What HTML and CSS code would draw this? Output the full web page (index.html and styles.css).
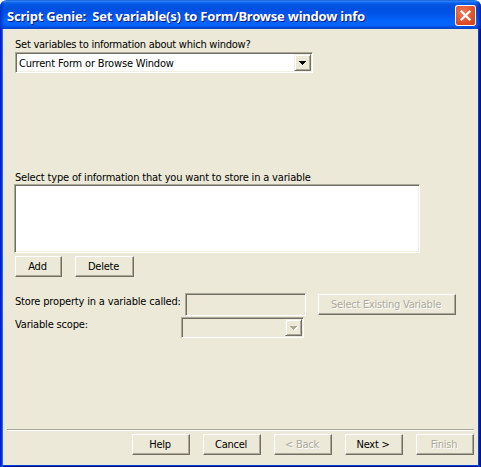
FILE: index.html
```html
<!DOCTYPE html>
<html lang="en">
<head>
<meta charset="utf-8">
<title>Script Genie</title>
<link rel="stylesheet" href="styles.css">
</head>
<body>
<div class="window">
  <header class="titlebar">
    <h1 class="title">Script Genie:&nbsp; Set variable(s) to Form/Browse window info</h1>
    <button class="close" aria-label="Close"><svg width="21" height="21" viewBox="0 0 21 21"><path d="M5.7 5.7 15.3 15.3M15.3 5.7 5.7 15.3" stroke="#fff" stroke-width="2.3"/></svg></button>
  </header>
  <main class="content">
    <section class="target">
      <div class="label l-target">Set variables to information about which window?</div>
      <div class="combo combo-target"><span class="combo-text">Current Form or Browse Window</span><span class="arrow"><svg width="7" height="4" viewBox="0 0 7 4" shape-rendering="crispEdges"><path d="M0 0H7V1H6V2H5V3H4V4H3V3H2V2H1V1H0Z" fill="#000"/></svg></span></div>
    </section>
    <section class="types">
      <div class="label l-types">Select type of information that you want to store in a variable</div>
      <div class="listbox"></div>
      <div class="actions">
        <button class="btn b-add"><span>Add</span></button>
        <button class="btn b-delete"><span>Delete</span></button>
      </div>
    </section>
    <section class="store">
      <div class="row">
        <div class="label l-store">Store property in a variable called:</div>
        <div class="field"></div>
        <button class="btn b-select disabled"><span>Select Existing Variable</span></button>
      </div>
      <div class="row">
        <div class="label l-scope">Variable scope:</div>
        <div class="combo combo-scope"><span class="arrow"><svg class="dim" width="8" height="5" viewBox="0 0 8 5" shape-rendering="crispEdges"><path d="M1 1H8V2H7V3H6V4H5V5H4V4H3V3H2V2H1Z" fill="#fff"/><path d="M0 0H7V1H6V2H5V3H4V4H3V3H2V2H1V1H0Z" fill="#aca899"/></svg></span></div>
      </div>
    </section>
  </main>
  <footer class="footer">
    <button class="btn"><span>Help</span></button>
    <button class="btn"><span>Cancel</span></button>
    <button class="btn disabled"><span>&lt; Back</span></button>
    <button class="btn"><span>Next &gt;</span></button>
    <button class="btn disabled"><span>Finish</span></button>
  </footer>
</div>
</body>
</html>
```
FILE: styles.css
```css
* { box-sizing: border-box; }
html { background: #fff; }
body {
  margin: 0;
  font: 11px/13px "DejaVu Sans Condensed", "DejaVu Sans", sans-serif;
  font-stretch: condensed;
  letter-spacing: -0.17px;
  color: #000;
}
.window {
  width: 481px;
  height: 467px;
  display: flex;
  flex-direction: column;
  background:
    linear-gradient(90deg, #0019cf 0 1px, #0831d9 1px 2px, #166aee 2px 3px, transparent 3px calc(100% - 3px), #0441d8 calc(100% - 3px) calc(100% - 2px), #001ea0 calc(100% - 2px) calc(100% - 1px), #00138c calc(100% - 1px)),
    linear-gradient(0deg, #00138c 0 1px, #0441d8 1px 2px, #ece9d8 2px);
  border-radius: 7px 7px 0 0;
  overflow: hidden;
}
.titlebar {
  height: 29px;
  flex: none;
  display: flex;
  justify-content: space-between;
  padding: 5px 5px 0 7px;
  background:
    linear-gradient(90deg, #0030c8 0, transparent 4px, transparent calc(100% - 5px), #0024ac 100%),
    linear-gradient(180deg, #0848c8 0, #3a8cf8 1px, #1470f0 2px, #0458e4 4px, #0050e0 8px, #0054e8 14px, #0464fc 21px, #0464fc 25px, #0050e0 27px, #0040c8 29px);
}
.title {
  margin: 0;
  padding-top: 3px;
  font: bold 13px/16px "Noto Sans", sans-serif;
  letter-spacing: -0.22px;
  color: #fff;
  text-shadow: 1px 1px 0 #0a1883;
  white-space: nowrap;
}
.close {
  width: 21px;
  height: 21px;
  padding: 0;
  border: 0;
  border-radius: 3px;
  background: radial-gradient(circle at 40% 35%, #ec7c58, #e05028 55%, #c43810);
  box-shadow: inset 0 0 0 1px #fff;
}
.close svg { display: block; }
.content { flex: 1; padding: 9px 0 0 15px; }
.label { white-space: nowrap; }
.l-target { letter-spacing: -0.25px; }
.target { height: 133px; }
.combo {
  height: 21px;
  display: flex;
  justify-content: space-between;
  border: 1px solid;
  border-color: #aca899 #fff #fff #aca899;
  box-shadow: inset 1px 1px #716f64, inset -1px -1px #f1efe2;
  padding: 1px;
}
.combo-target { width: 298px; margin-top: 1px; background: #fff; }
.combo-text { padding: 3px 0 0 2px; white-space: nowrap; }
.arrow {
  width: 17px;
  height: 17px;
  display: flex;
  align-items: center;
  justify-content: center;
  background: #ece9d8;
  border: 1px solid;
  border-color: #f1efe2 #716f64 #716f64 #f1efe2;
  box-shadow: inset 1px 1px #fff, inset -1px -1px #aca899;
}
.listbox {
  width: 406px;
  height: 69px;
  margin-left: -1px;
  background: #fff;
  border: 1px solid;
  border-color: #aca899 #fff #fff #aca899;
  box-shadow: inset 1px 1px #716f64, inset -1px -1px #f1efe2;
}
.actions { display: flex; gap: 13px; padding-top: 3px; }
.btn {
  width: 58px;
  height: 21px;
  padding: 0 2px 1px 0;
  flex: none;
  font: inherit;
  letter-spacing: -0.25px;
  color: #000;
  white-space: nowrap;
  background: #ece9d8;
  border: 1px solid;
  border-color: #fff #716f64 #716f64 #fff;
  box-shadow: inset -1px -1px #aca899;
}
.disabled { color: #aca899; text-shadow: 1px 1px #fff; }
.b-add { width: 47px; }
.b-delete { width: 59px; }
.b-select { width: 138px; margin: 1px 0 0 12px; }
.store { padding-top: 16px; }
.row { display: flex; }
.l-store { width: 170px; padding-top: 2px; }
.l-scope { width: 166px; padding-top: 1px; }
.field {
  width: 121px;
  height: 23px;
  border: 1px solid;
  border-color: #aca899 #fff #fff #aca899;
  box-shadow: inset 1px 1px #716f64;
}
.row + .row { margin-top: 1px; }
.combo-scope { width: 123px; justify-content: flex-end; box-shadow: inset 1px 1px #716f64; }
.dim { margin: 1px 0 0 1px; }
.footer {
  height: 38px;
  flex: none;
  margin: 0 7px;
  padding-top: 5px;
  display: flex;
  justify-content: flex-end;
  gap: 13px;
  background: linear-gradient(#aca899 0 1px, #fff 1px 2px, transparent 2px);
}
```
